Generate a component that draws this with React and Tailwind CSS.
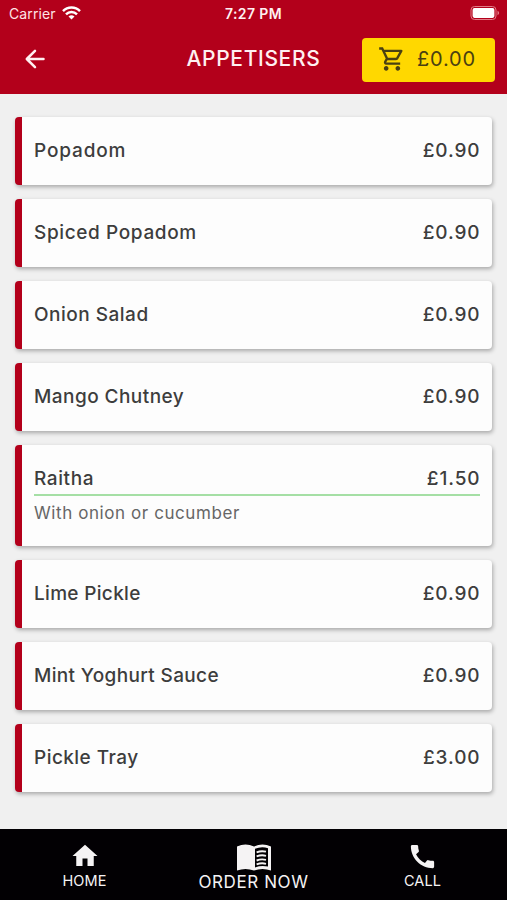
import { MdCall, MdHome, MdOutlineShoppingCart } from 'react-icons/md';

const items = [
  { name: 'Popadom', price: '£0.90', nameTracking: 'tracking-[0.85px]' },
  { name: 'Spiced Popadom', price: '£0.90', nameTracking: 'tracking-[0.62px]' },
  { name: 'Onion Salad', price: '£0.90', nameTracking: 'tracking-[0.5px]' },
  { name: 'Mango Chutney', price: '£0.90', nameTracking: 'tracking-[0.45px]' },
  { name: 'Raitha', price: '£1.50', description: 'With onion or cucumber', nameTracking: 'tracking-[0.6px]' },
  { name: 'Lime Pickle', price: '£0.90', nameTracking: 'tracking-[0.32px]' },
  { name: 'Mint Yoghurt Sauce', price: '£0.90', nameTracking: 'tracking-[0.35px]' },
  { name: 'Pickle Tray', price: '£3.00', nameTracking: 'tracking-[0.45px]' },
];

const StatusBar = () => (
  <div className="h-7 grid grid-cols-3 items-center px-2 text-[14px] leading-none">
    <div className="flex items-center gap-[6px]">
      <span className="ml-px tracking-[0.1px] text-[#ffe3e6]">Carrier</span>
      <svg className="w-[19px] h-[14px] -mt-0.5" viewBox="0 0 19 14" fill="none" stroke="currentColor" strokeWidth="2.5">
        <path d="M1 5.1a12 12 0 0 1 17 0" />
        <path d="M4 8.3a7.8 7.8 0 0 1 11 0" />
        <path d="M9.5 13.6 6.5 10.6a4.3 4.3 0 0 1 6 0z" fill="currentColor" stroke="none" />
      </svg>
    </div>
    <div className="text-center font-semibold text-[14px] tracking-[0.4px] text-[#fff0f1]">7:27 PM</div>
    <svg className="justify-self-end w-[30px] h-[14px] -mr-px -mt-0.5" viewBox="0 0 30 14" fill="none">
      <rect x="1" y="0.5" width="25" height="13" rx="3.5" stroke="#e27a86" />
      <rect x="2.6" y="2.1" width="21.8" height="9.8" rx="1.8" fill="#fff" />
      <path d="M27.5 4.8v4.4c1-.4 1.6-1.2 1.6-2.2s-.6-1.8-1.6-2.2z" fill="#e27a86" />
    </svg>
  </div>
);

const Header = () => (
  <header className="h-[94px] shrink-0 bg-[#b3001b] text-white">
    <StatusBar />
    <div className="grid grid-cols-[1fr_auto_1fr] items-center h-[63px] px-3">
      <svg className="ml-[13px] w-5 h-5 -mt-px" viewBox="0 0 20 20" fill="none" stroke="#fff0f1" strokeWidth="2.5" strokeLinecap="round" strokeLinejoin="round">
        <path d="M18.5 10H2M10 1.8 1.8 10l8.2 8.2" />
      </svg>
      <h1 className="-mt-0.5 text-[21px] leading-none font-medium tracking-[0.65px] text-[#fff0f1]">APPETISERS</h1>
      <button className="justify-self-end flex items-center w-[133px] h-11 pl-4 rounded-[4px] bg-[#ffd800] text-[#4a4012]">
        <MdOutlineShoppingCart className="w-7 h-7 -mt-px" />
        <span className="ml-[11px] -mt-px text-[20px] leading-none tracking-[0.8px]">£0.00</span>
      </button>
    </div>
  </header>
);

const MenuItem = ({ item }) => (
  <li className={`${item.description ? 'h-[101.8px]' : 'h-[68.4px]'} bg-[#fdfdfd] border-l-[7px] border-[#b3001b] rounded-[4px] shadow-[1px_2px_4px_rgba(0,0,0,0.3)] px-3 pt-5`}>
    <div className="flex justify-between items-center h-[29px] text-[19px] font-[450] text-[#3d3d3d]">
      <span className={item.nameTracking}>{item.name}</span>
      <span className="-mr-[0.5px] tracking-[0.9px]">{item.price}</span>
    </div>
    {item.description && (
      <p className="border-t-2 border-[#a5dfa5] pt-[5px] text-[17px] text-[#666] tracking-[0.58px]">{item.description}</p>
    )}
  </li>
);

const OpenMenu = () => (
  <svg className="w-[34px] h-[27px]" viewBox="0 0 34 27" fill="none">
    <path d="M0 2.6Q8.5-1.6 17 2.6 25.5-1.6 34 2.6V26.6Q25.5 23.4 17 26.6 8.5 23.4 0 26.6z" fill="#f5f3f4" />
    <path d="M18 4.8Q24.5 2 31 4.2V22.6Q24.5 21 18 23.4z" fill="#020003" />
    <path d="M19.6 8.3q4.7-1.8 9.4-.6M19.6 12.4q4.7-1.8 9.4-.6M19.6 16.5q4.7-1.8 9.4-.6M19.6 20.4q4.7-1.8 9.4-.6" stroke="#f5f3f4" strokeWidth="1.9" />
  </svg>
);

const BottomNav = () => (
  <nav className="h-[71px] shrink-0 bg-[#020003] text-[#f5f3f4] grid grid-cols-3 leading-none">
    <a className="flex flex-col items-center pt-3">
      <MdHome className="w-[30px] h-[30px]" />
      <span className="mt-[3px] text-[14.5px] tracking-[0.1px]">HOME</span>
    </a>
    <a className="flex flex-col items-center pt-[15px]">
      <OpenMenu />
      <span className="mt-[3px] text-[17px] tracking-[0.6px]">ORDER NOW</span>
    </a>
    <a className="flex flex-col items-center pt-3">
      <MdCall className="w-[31px] h-[31px]" />
      <span className="mt-[2px] text-[14.5px] tracking-[0.1px]">CALL</span>
    </a>
  </nav>
);

const App = () => (
  <div className="h-[900px] w-full flex flex-col bg-[#f0f0f0] font-['Inter',sans-serif]">
    <Header />
    <main className="flex-1 px-[15px] pt-[23px]">
      <ul className="flex flex-col gap-[13.5px]">
        {items.map((item) => (
          <MenuItem key={item.name} item={item} />
        ))}
      </ul>
    </main>
    <BottomNav />
  </div>
);

export default App;
